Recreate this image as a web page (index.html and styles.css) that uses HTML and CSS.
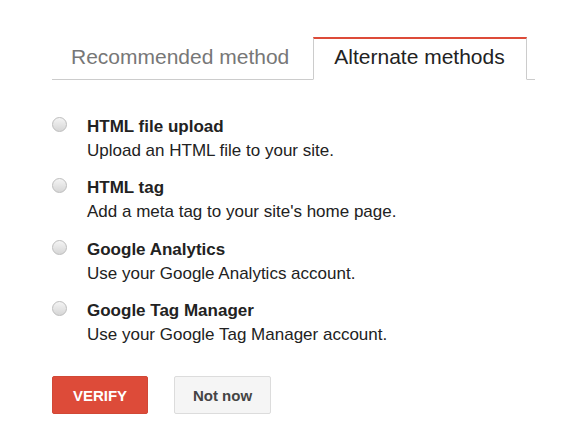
FILE: index.html
```html
<!DOCTYPE html>
<html>
<head>
	<title>Verify ownership</title>
	<meta charset="utf-8">
	<link rel="stylesheet" href="styles.css">
</head>
<body>
	<div class="panel">
		<div class="tabs">
			<div class="tab">Recommended method</div>
			<div class="tab active">Alternate methods</div>
			<div class="tab-rest"></div>
		</div>

		<ul class="methods">
			<li>
				<span class="radio"></span>
				<div>
					<b>HTML file upload</b>
					<p>Upload an HTML file to your site.</p>
				</div>
			</li>
			<li>
				<span class="radio"></span>
				<div>
					<b>HTML tag</b>
					<p>Add a meta tag to your site's home page.</p>
				</div>
			</li>
			<li>
				<span class="radio"></span>
				<div>
					<b>Google Analytics</b>
					<p>Use your Google Analytics account.</p>
				</div>
			</li>
			<li>
				<span class="radio"></span>
				<div>
					<b>Google Tag Manager</b>
					<p>Use your Google Tag Manager account.</p>
				</div>
			</li>
		</ul>

		<div class="actions">
			<button class="verify">VERIFY</button>
			<button class="later">Not now</button>
		</div>
	</div>
</body>
</html>
```

FILE: styles.css
```css
body{
	margin: 0;
	background: #fff;
	font-family: "Liberation Sans", Arial, sans-serif;
	color: #222;
}
.panel{
	padding: 37px 0 0 52px;
}
.tabs{
	display: flex;
	align-items: flex-end;
}
.tab{
	box-sizing: border-box;
	height: 43px;
	line-height: 36px;
	padding: 0 24px 0 19px;
	font-size: 21px;
	color: #777;
	border-top: 2px solid transparent;
	border-bottom: 1px solid #ccc;
}
.tab.active{
	padding: 0 21px 0 20px;
	color: #222;
	border: 1px solid #ccc;
	border-top: 2px solid #dd4b39;
	border-bottom: 1px solid transparent;
}
.tab-rest{
	width: 8px;
	border-bottom: 1px solid #ccc;
}
.methods{
	list-style: none;
	margin: 0;
	padding: 35px 0 0 0;
}
.methods li{
	display: flex;
	gap: 20px;
	height: 61.33px;
}
.radio{
	box-sizing: border-box;
	width: 15px;
	height: 15px;
	margin-top: 2px;
	border-radius: 50%;
	border: 1px solid #bdbdbd;
	background: linear-gradient(#f4f4f4, #d6d6d6);
}
.methods b{
	display: block;
	font-size: 17px;
	line-height: 24px;
	color: #222;
}
.methods p{
	margin: 0;
	font-size: 17px;
	line-height: 24px;
	color: #222;
}
.actions{
	display: flex;
	gap: 26px;
	margin-top: 16px;
}
button{
	height: 38px;
	border-radius: 2px;
	font-family: "Liberation Sans", Arial, sans-serif;
	font-size: 15px;
	font-weight: bold;
}
.verify{
	width: 96px;
	color: #fff;
	background: #dd4b39;
	border: 1px solid #d14836;
}
.later{
	width: 97px;
	color: #444;
	background: #f5f5f5;
	border: 1px solid #dcdcdc;
}
```
